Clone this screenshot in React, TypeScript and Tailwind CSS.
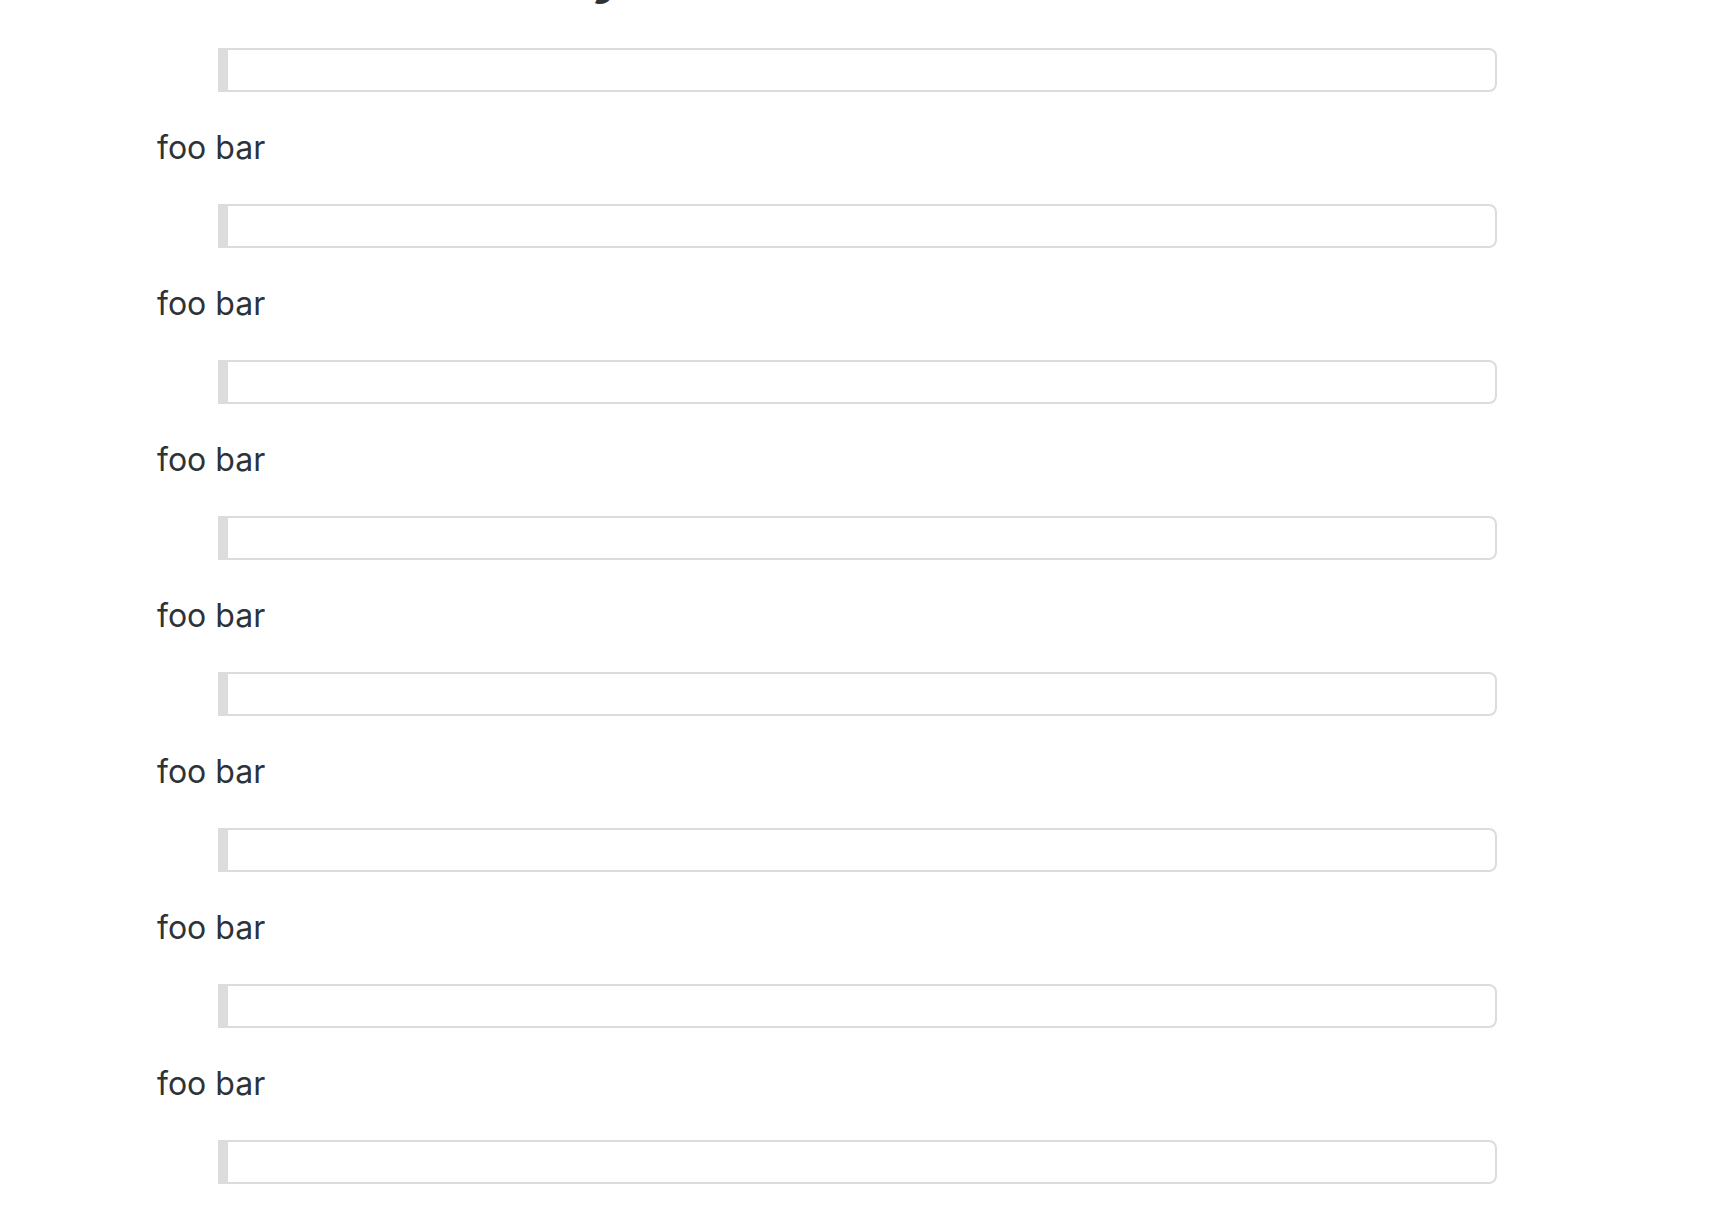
const ROWS = 7;

function Quote() {
  return (
    <blockquote className="ml-[61px] h-[44px] rounded-r-[8px] border-2 border-l-[10px] border-[#dcdcdc] bg-white" />
  );
}

export default function App() {
  return (
    <div
      className="min-h-screen overflow-hidden bg-white text-[#2e3338]"
      style={{ fontFamily: 'Inter, "Open Sans", "Liberation Sans", sans-serif' }}
    >
      <div className="mt-[-47px] w-[1497px] pl-[157px]">
        <h1 className="mb-[47px] text-[48px] font-extrabold italic leading-[48px]">
          Bordered Inset Only
        </h1>
        <div className="flex flex-col gap-8">
          <Quote />
          {Array.from({ length: ROWS }).map((_, i) => (
            <div key={i} className="flex flex-col gap-8">
              <p className="text-[32px] leading-[48px]">foo bar</p>
              <Quote />
            </div>
          ))}
        </div>
      </div>
    </div>
  );
}
